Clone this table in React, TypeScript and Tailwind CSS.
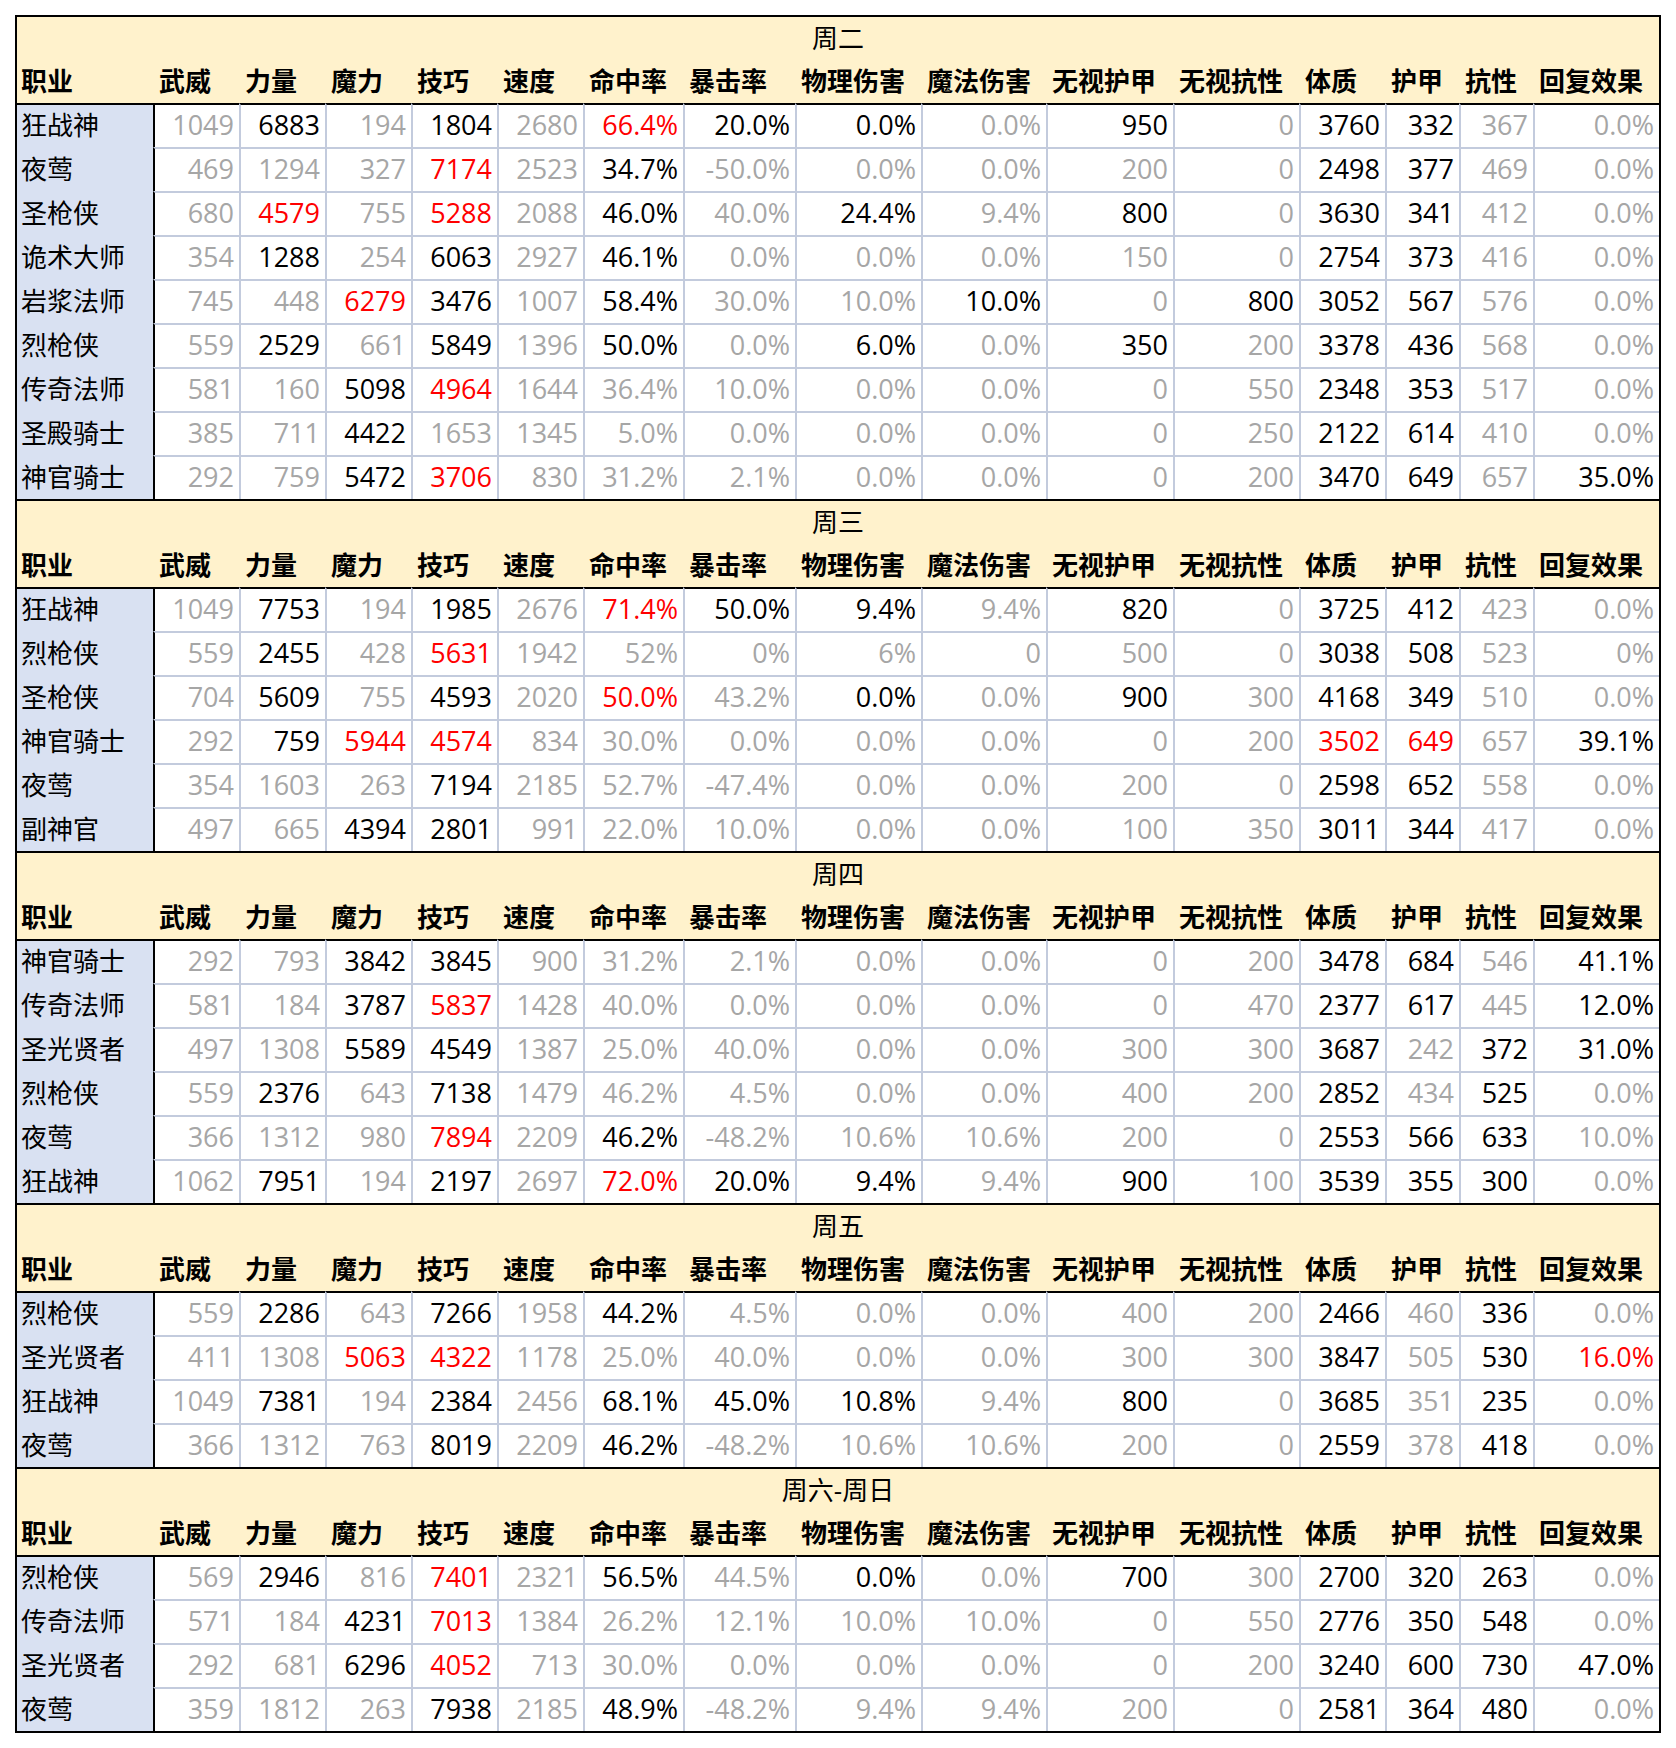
import React from "react";

const HEADERS = ["职业", "武威", "力量", "魔力", "技巧", "速度", "命中率", "暴击率", "物理伤害", "魔法伤害", "无视护甲", "无视抗性", "体质", "护甲", "抗性", "回复效果"];

type Section = { title: string; rows: string[] };

const SECTIONS: Section[] = [
  {
    title: "周二",
    rows: [
      "狂战神 g1049 k6883 g194 k1804 g2680 r66.4% k20.0% k0.0% g0.0% k950 g0 k3760 k332 g367 g0.0%",
      "夜莺 g469 g1294 g327 r7174 g2523 k34.7% g-50.0% g0.0% g0.0% g200 g0 k2498 k377 g469 g0.0%",
      "圣枪侠 g680 r4579 g755 r5288 g2088 k46.0% g40.0% k24.4% g9.4% k800 g0 k3630 k341 g412 g0.0%",
      "诡术大师 g354 k1288 g254 k6063 g2927 k46.1% g0.0% g0.0% g0.0% g150 g0 k2754 k373 g416 g0.0%",
      "岩浆法师 g745 g448 r6279 k3476 g1007 k58.4% g30.0% g10.0% k10.0% g0 k800 k3052 k567 g576 g0.0%",
      "烈枪侠 g559 k2529 g661 k5849 g1396 k50.0% g0.0% k6.0% g0.0% k350 g200 k3378 k436 g568 g0.0%",
      "传奇法师 g581 g160 k5098 r4964 g1644 g36.4% g10.0% g0.0% g0.0% g0 g550 k2348 k353 g517 g0.0%",
      "圣殿骑士 g385 g711 k4422 g1653 g1345 g5.0% g0.0% g0.0% g0.0% g0 g250 k2122 k614 g410 g0.0%",
      "神官骑士 g292 g759 k5472 r3706 g830 g31.2% g2.1% g0.0% g0.0% g0 g200 k3470 k649 g657 k35.0%",
    ],
  },
  {
    title: "周三",
    rows: [
      "狂战神 g1049 k7753 g194 k1985 g2676 r71.4% k50.0% k9.4% g9.4% k820 g0 k3725 k412 g423 g0.0%",
      "烈枪侠 g559 k2455 g428 r5631 g1942 g52% g0% g6% g0 g500 g0 k3038 k508 g523 g0%",
      "圣枪侠 g704 k5609 g755 k4593 g2020 r50.0% g43.2% k0.0% g0.0% k900 g300 k4168 k349 g510 g0.0%",
      "神官骑士 g292 k759 r5944 r4574 g834 g30.0% g0.0% g0.0% g0.0% g0 g200 r3502 r649 g657 k39.1%",
      "夜莺 g354 g1603 g263 k7194 g2185 g52.7% g-47.4% g0.0% g0.0% g200 g0 k2598 k652 g558 g0.0%",
      "副神官 g497 g665 k4394 k2801 g991 g22.0% g10.0% g0.0% g0.0% g100 g350 k3011 k344 g417 g0.0%",
    ],
  },
  {
    title: "周四",
    rows: [
      "神官骑士 g292 g793 k3842 k3845 g900 g31.2% g2.1% g0.0% g0.0% g0 g200 k3478 k684 g546 k41.1%",
      "传奇法师 g581 g184 k3787 r5837 g1428 g40.0% g0.0% g0.0% g0.0% g0 g470 k2377 k617 g445 k12.0%",
      "圣光贤者 g497 g1308 k5589 k4549 g1387 g25.0% g40.0% g0.0% g0.0% g300 g300 k3687 g242 k372 k31.0%",
      "烈枪侠 g559 k2376 g643 k7138 g1479 g46.2% g4.5% g0.0% g0.0% g400 g200 k2852 g434 k525 g0.0%",
      "夜莺 g366 g1312 g980 r7894 g2209 k46.2% g-48.2% g10.6% g10.6% g200 g0 k2553 k566 k633 g10.0%",
      "狂战神 g1062 k7951 g194 k2197 g2697 r72.0% k20.0% k9.4% g9.4% k900 g100 k3539 k355 k300 g0.0%",
    ],
  },
  {
    title: "周五",
    rows: [
      "烈枪侠 g559 k2286 g643 k7266 g1958 k44.2% g4.5% g0.0% g0.0% g400 g200 k2466 g460 k336 g0.0%",
      "圣光贤者 g411 g1308 r5063 r4322 g1178 g25.0% g40.0% g0.0% g0.0% g300 g300 k3847 g505 k530 r16.0%",
      "狂战神 g1049 k7381 g194 k2384 g2456 k68.1% k45.0% k10.8% g9.4% k800 g0 k3685 g351 k235 g0.0%",
      "夜莺 g366 g1312 g763 k8019 g2209 k46.2% g-48.2% g10.6% g10.6% g200 g0 k2559 g378 k418 g0.0%",
    ],
  },
  {
    title: "周六-周日",
    rows: [
      "烈枪侠 g569 k2946 g816 r7401 g2321 k56.5% g44.5% k0.0% g0.0% k700 g300 k2700 k320 k263 g0.0%",
      "传奇法师 g571 g184 k4231 r7013 g1384 g26.2% g12.1% g10.0% g10.0% g0 g550 k2776 k350 k548 g0.0%",
      "圣光贤者 g292 g681 k6296 r4052 g713 g30.0% g0.0% g0.0% g0.0% g0 g200 k3240 k600 k730 k47.0%",
      "夜莺 g359 g1812 g263 k7938 g2185 k48.9% g-48.2% g9.4% g9.4% g200 g0 k2581 k364 k480 g0.0%",
    ],
  },
];

const GRID =
  "grid grid-cols-[136px_86px_86px_86px_86px_86px_100px_112px_126px_125px_127px_126px_86px_74px_74px_126px]";

const COLOR: Record<string, string> = {
  g: "text-[#A6A6A6]",
  k: "text-black",
  r: "text-[#FF0000]",
};

function DataRow({ line, first }: { line: string; first: boolean }) {
  const parts = line.split(" ");
  const name = parts[0];
  const vals = parts.slice(1);
  return (
    <div className={`${GRID} h-[44px]`}>
      <div
        className={`bg-[#D9E1F2] border-t-2 ${first ? "border-black" : "border-transparent"} flex items-center pl-[4px] pb-[3px] text-black`}
      >
        {name}
      </div>
      {vals.map((v, i) => {
        const c = v[0];
        const t = v.slice(1);
        const left = i === 0 ? "border-l-black" : "border-l-[#C3CBDD]";
        const top = first ? "border-t-black" : "border-t-[#C3CBDD]";
        return (
          <div
            key={i}
            className={`bg-white border-t-2 border-l-2 ${left} ${top} flex items-center justify-end pr-[5px] pb-[4px] text-[27px] ${COLOR[c]}`}
          >
            {t}
          </div>
        );
      })}
    </div>
  );
}

function SectionBlock({ s }: { s: Section }) {
  return (
    <div>
      <div className="h-[44px] bg-[#FFF2CC] border-t-2 border-black flex items-center justify-center text-black">
        {s.title}
      </div>
      <div className={`${GRID} h-[44px] bg-[#FFF2CC] font-bold text-black`}>
        {HEADERS.map((h, i) => (
          <div key={i} className={`flex items-center ${i === 0 ? "pl-[4px]" : "pl-[6px]"}`}>
            <span className="whitespace-nowrap">{h}</span>
          </div>
        ))}
      </div>
      {s.rows.map((r, i) => (
        <DataRow key={i} line={r} first={i === 0} />
      ))}
    </div>
  );
}

export default function App() {
  return (
    <div
      className="min-h-[1748px] bg-white pt-[15px] pl-[15px] text-[26px] leading-none"
      style={{ fontFamily: '"Open Sans", "Noto Sans CJK SC", sans-serif' }}
    >
      <div className="w-[1646px] border-x-2 border-b-2 border-black">
        {SECTIONS.map((s, i) => (
          <SectionBlock key={i} s={s} />
        ))}
      </div>
    </div>
  );
}
